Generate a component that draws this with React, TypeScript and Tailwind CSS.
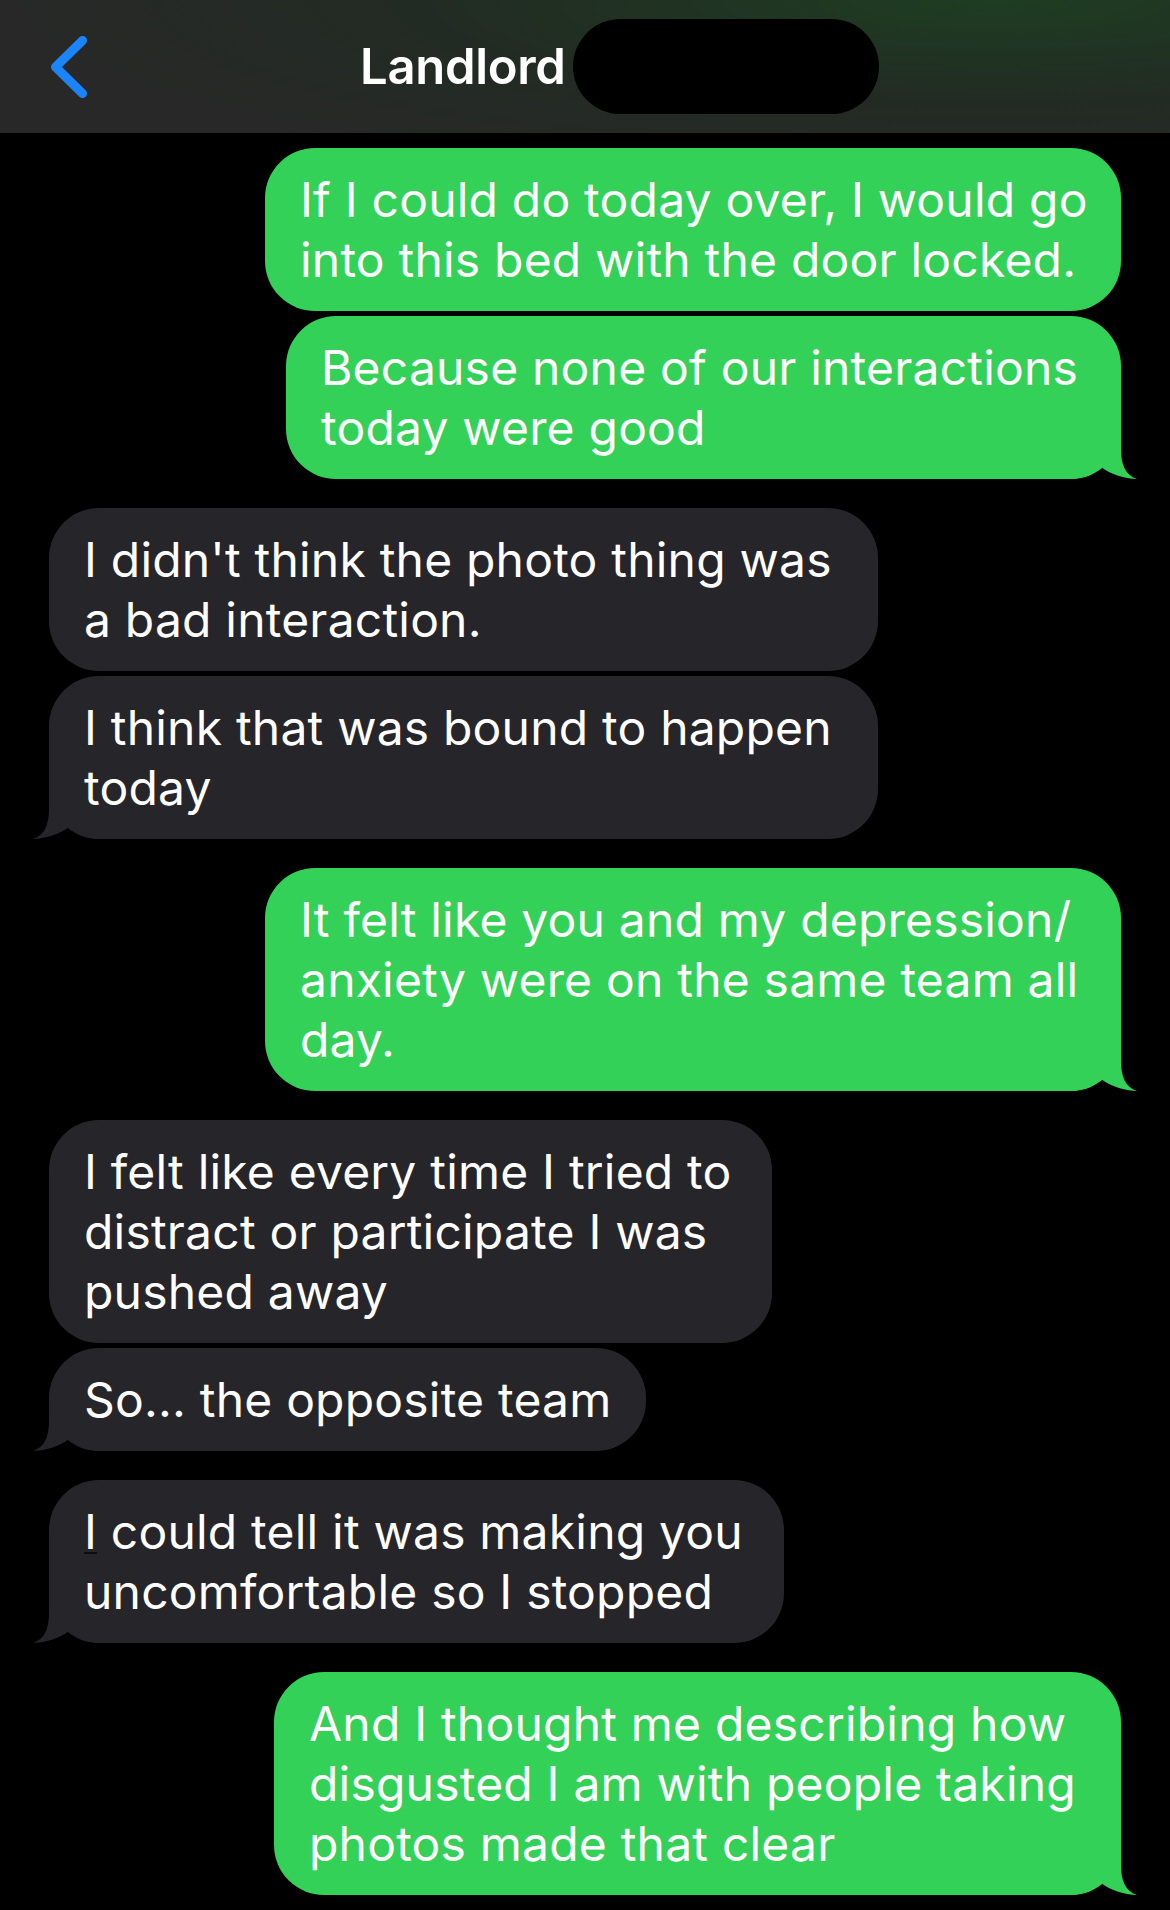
import React from "react";

type Msg = {
  me: boolean;
  lines: React.ReactNode[];
  w: number;
  tail: boolean;
  gapTop: number;
};

const msgs: Msg[] = [
  { me: true, lines: ["If I could do today over, I would go", "into this bed with the door locked."], w: 856, tail: false, gapTop: 0 },
  { me: true, lines: ["Because none of our interactions", "today were good"], w: 835, tail: true, gapTop: 5 },
  { me: false, lines: ["I didn't think the photo thing was", "a bad interaction."], w: 829, tail: false, gapTop: 29 },
  { me: false, lines: ["I think that was bound to happen", "today"], w: 829, tail: true, gapTop: 5 },
  { me: true, lines: ["It felt like you and my depression/", "anxiety were on the same team all", "day."], w: 856, tail: true, gapTop: 29 },
  { me: false, lines: ["I felt like every time I tried to", "distract or participate I was", "pushed away"], w: 723, tail: false, gapTop: 29 },
  { me: false, lines: ["So... the opposite team"], w: 597, tail: true, gapTop: 5 },
  {
    me: false,
    lines: [
      <>
        <span className="underline decoration-[#0d0d0f] decoration-2 underline-offset-[3px]">I</span> could tell it was making you
      </>,
      "uncomfortable so I stopped",
    ],
    w: 735,
    tail: true,
    gapTop: 29,
  },
  { me: true, lines: ["And I thought me describing how", "disgusted I am with people taking", "photos made that clear"], w: 847, tail: true, gapTop: 29 },
];

function Tail({ me }: { me: boolean }) {
  return (
    <svg
      width="70"
      height="50"
      viewBox="0 0 70 50"
      className={
        me
          ? "absolute bottom-0 right-[-20px] fill-[#34d158]"
          : "absolute bottom-0 left-[-20px] -scale-x-100 fill-[#26252a]"
      }
    >
      <path d="M0,0 H50 V20 C50,35 54,46 66,50 C56,50 40,46 30,38 C22,45 12,50 0,50 Z" />
    </svg>
  );
}

function Bubble({ m }: { m: Msg }) {
  return (
    <div
      className={`flex ${m.me ? "justify-end pr-[49px]" : "justify-start pl-[49px]"}`}
      style={{ marginTop: m.gapTop }}
    >
      <div
        className={`relative rounded-[50px] pl-[35px] pt-[22px] pb-[21px] text-[48px] leading-[60px] tracking-[0.2px] text-white ${
          m.me ? "bg-[#34d158]" : "bg-[#26252a]"
        }`}
        style={{ width: m.w }}
      >
        {m.tail && <Tail me={m.me} />}
        <div className="relative">
          {m.lines.map((l, i) => (
            <div key={i} className="whitespace-nowrap">
              {l}
            </div>
          ))}
        </div>
      </div>
    </div>
  );
}

export default function App() {
  return (
    <div
      className="min-h-[1910px] w-full bg-black"
      style={{ fontFamily: "Inter, 'Noto Sans', 'Liberation Sans', sans-serif" }}
    >
      <header className="flex h-[133px] items-center bg-[radial-gradient(ellipse_90%_140%_at_85%_0%,#1e3d22_0%,#222b23_55%,#282828_100%)]">
        <svg width="46" height="72" viewBox="0 0 46 72" className="ml-[46px] shrink-0">
          <polyline
            points="36.5,9.5 9.5,36 36.5,62.5"
            fill="none"
            stroke="#1a84f8"
            strokeWidth="9"
            strokeLinecap="round"
            strokeLinejoin="round"
          />
        </svg>
        <div className="ml-[268px] text-[49px] font-semibold leading-none tracking-[-0.3px] text-white">Landlord</div>
        <div className="ml-[7px] h-[95px] w-[306px] rounded-full bg-black" />
      </header>
      <main className="flex flex-col pt-[15px] pb-[15px]">
        {msgs.map((m, i) => (
          <Bubble key={i} m={m} />
        ))}
      </main>
    </div>
  );
}
